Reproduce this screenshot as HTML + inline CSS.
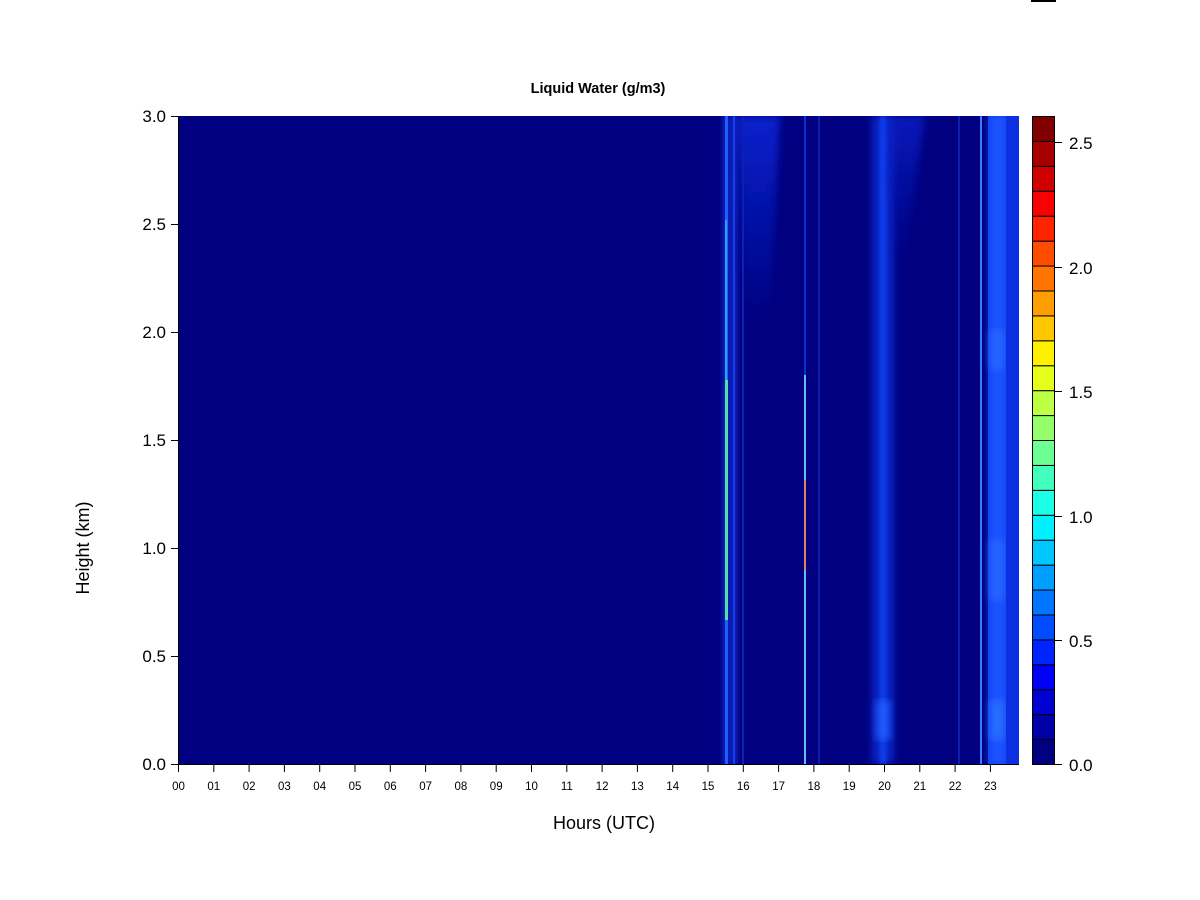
<!DOCTYPE html>
<html><head><meta charset="utf-8"><style>
html,body{margin:0;padding:0;background:#fff;width:1200px;height:900px;overflow:hidden}
svg{display:block}
text{font-family:"Liberation Sans",Arial,sans-serif;fill:#000}
</style></head><body>
<svg width="1200" height="900" viewBox="0 0 1200 900">
<defs>
<filter id="b1" x="-50%" y="-5%" width="200%" height="110%"><feGaussianBlur stdDeviation="2"/></filter>
<filter id="b3" x="-50%" y="-5%" width="200%" height="110%"><feGaussianBlur stdDeviation="4"/></filter>
<linearGradient id="topfade" x1="0" y1="0" x2="0" y2="1">
<stop offset="0" stop-color="#0a2ae0"/><stop offset="1" stop-color="#0a2ae0" stop-opacity="0"/></linearGradient>
<clipPath id="pc"><rect x="178" y="116" width="841" height="648"/></clipPath>
</defs>
<rect x="1031" y="0" width="25" height="2" fill="#000"/>
<text x="598" y="93" font-size="14.5" font-weight="bold" text-anchor="middle">Liquid Water (g/m3)</text>
<g clip-path="url(#pc)">
<rect x="178" y="116" width="841" height="648" fill="#000080"/>
<rect x="722" y="116" width="16" height="648" fill="#0a1cb0" filter="url(#b1)"/>
<polygon points="736,116 780,116 770,320 745,320" fill="url(#topfade)" filter="url(#b3)" opacity="0.8"/>
<rect x="725" y="116" width="3" height="648" fill="#1a60ff"/>
<rect x="725" y="380" width="3" height="240" fill="#50e0b0"/>
<rect x="725" y="220" width="2" height="160" fill="#30a0ff"/>
<rect x="733" y="116" width="2" height="648" fill="#1540f0"/>
<rect x="742" y="116" width="2" height="648" fill="#0a22b0"/>
<rect x="804" y="116" width="2" height="648" fill="#0a30d0"/>
<rect x="804" y="375" width="2" height="389" fill="#60c0ff"/>
<rect x="804" y="480" width="2" height="90" fill="#e08060"/>
<rect x="818" y="116" width="2" height="648" fill="#0a1fb0"/>
<rect x="872" y="116" width="22" height="648" fill="#0a2ad0" filter="url(#b3)" opacity="0.85"/>
<rect x="880" y="116" width="6" height="648" fill="#1040f0" filter="url(#b1)"/>
<polygon points="890,116 925,116 905,260 895,260" fill="url(#topfade)" filter="url(#b3)" opacity="0.6"/>
<rect x="876" y="700" width="14" height="40" fill="#2060ff" filter="url(#b3)" opacity="0.8"/>
<rect x="958" y="116" width="2" height="648" fill="#0a20b0"/>
<rect x="980" y="116" width="2" height="648" fill="#3080ff"/>
<rect x="988" y="116" width="31" height="648" fill="#0d3cf0"/>
<rect x="990" y="116" width="16" height="648" fill="#1a55ff" filter="url(#b3)"/>
<rect x="990" y="330" width="14" height="40" fill="#2a6cff" filter="url(#b3)" opacity="0.7"/>
<rect x="990" y="540" width="14" height="60" fill="#2a6cff" filter="url(#b3)" opacity="0.7"/>
<rect x="990" y="700" width="14" height="40" fill="#2f78ff" filter="url(#b3)" opacity="0.7"/>
<rect x="1006" y="116" width="13" height="648" fill="#0b30e0"/>
</g>
<g stroke="#000" stroke-width="1">
<line x1="178.5" y1="116" x2="178.5" y2="764"/>
<line x1="171" y1="116.5" x2="178" y2="116.5"/>
<line x1="171" y1="224.5" x2="178" y2="224.5"/>
<line x1="171" y1="332.5" x2="178" y2="332.5"/>
<line x1="171" y1="440.5" x2="178" y2="440.5"/>
<line x1="171" y1="548.5" x2="178" y2="548.5"/>
<line x1="171" y1="656.5" x2="178" y2="656.5"/>
<line x1="171" y1="764.5" x2="1019" y2="764.5"/>
</g>
<g font-size="17" text-anchor="end">
<text x="166" y="122">3.0</text><text x="166" y="230">2.5</text><text x="166" y="338">2.0</text>
<text x="166" y="446">1.5</text><text x="166" y="554">1.0</text><text x="166" y="662">0.5</text><text x="166" y="770">0.0</text>
</g>
<g id="xt" stroke="#000"></g>
<g id="xl" font-size="11.5" text-anchor="middle"></g>
<text x="604" y="829" font-size="18" text-anchor="middle">Hours (UTC)</text>
<text transform="translate(89,548) rotate(-90)" font-size="18" text-anchor="middle">Height (km)</text>
<g id="cb"></g>
<g font-size="17">
<text x="1069" y="149">2.5</text><text x="1069" y="274">2.0</text><text x="1069" y="398">1.5</text>
<text x="1069" y="523">1.0</text><text x="1069" y="647">0.5</text><text x="1069" y="771">0.0</text>
</g>
<g stroke="#000">
<line x1="1055" y1="142.5" x2="1062" y2="142.5"/><line x1="1055" y1="267.5" x2="1062" y2="267.5"/>
<line x1="1055" y1="391.5" x2="1062" y2="391.5"/><line x1="1055" y1="516.5" x2="1062" y2="516.5"/>
<line x1="1055" y1="640.5" x2="1062" y2="640.5"/><line x1="1055" y1="764.5" x2="1062" y2="764.5"/>
</g>
</svg>
<script>
var ns="http://www.w3.org/2000/svg";
var xt=document.getElementById('xt'),xl=document.getElementById('xl');
for(var i=0;i<24;i++){var x=178.5+35.3*i;
var l=document.createElementNS(ns,'line');l.setAttribute('x1',x);l.setAttribute('x2',x);l.setAttribute('y1',764);l.setAttribute('y2',772);xt.appendChild(l);
var t=document.createElementNS(ns,'text');t.setAttribute('x',x);t.setAttribute('y',790);t.textContent=(i<10?'0':'')+i;xl.appendChild(t);}
var cols=["#000080","#0000A8","#0000D1","#0000FA","#0024FF","#004DFF","#0075FF","#009EFF","#00C7FF","#00F0FF","#1AFFE6","#42FFBD","#6BFF94","#94FF6B","#BDFF42","#E6FF1A","#FFF000","#FFC700","#FF9E00","#FF7500","#FF4D00","#FF2400","#FA0000","#D10000","#A80000","#800000"];
var cb=document.getElementById('cb');var h=648/26;
for(var k=0;k<26;k++){var r=document.createElementNS(ns,'rect');
r.setAttribute('x',1032.5);r.setAttribute('width',22);r.setAttribute('y',764.5-(k+1)*h);r.setAttribute('height',h);
r.setAttribute('fill',cols[k]);r.setAttribute('stroke','#000');r.setAttribute('stroke-width','1');cb.appendChild(r);}
</script>
</body></html>
